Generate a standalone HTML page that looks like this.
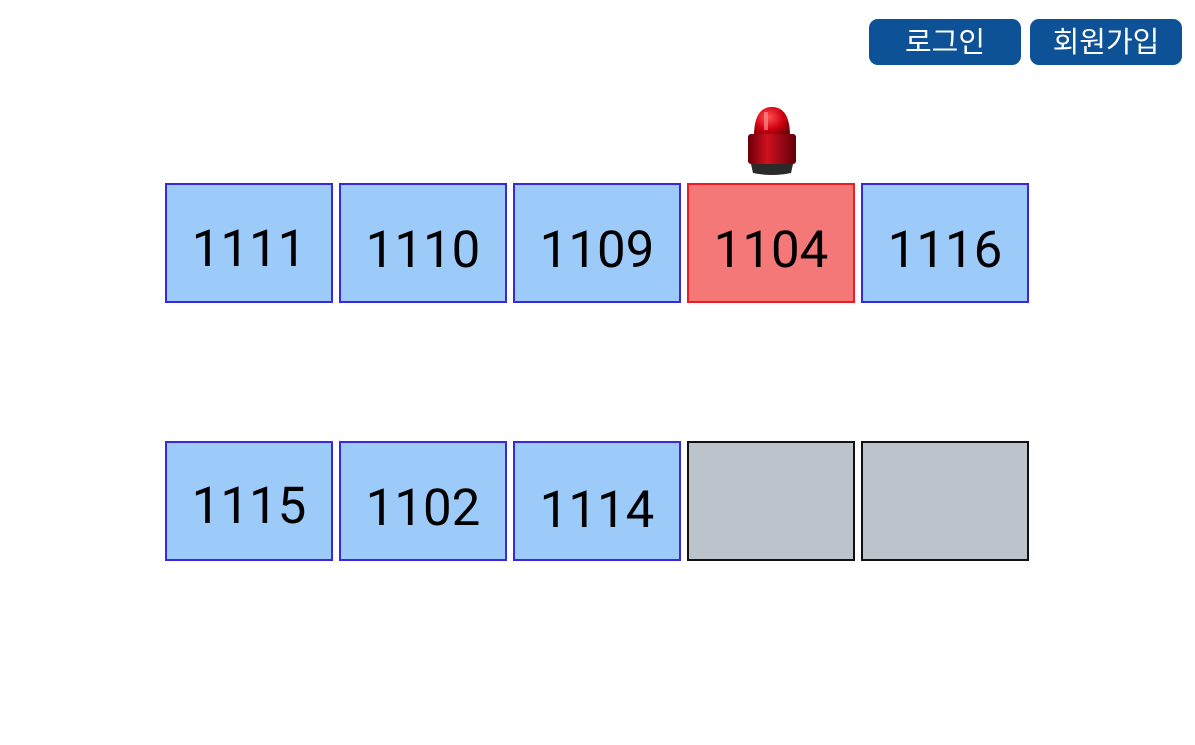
<!DOCTYPE html>
<html><head><meta charset="utf-8"><style>
body{margin:0;width:1195px;height:745px;background:#fff;position:relative;overflow:hidden;font-family:"Liberation Sans","Noto Sans CJK KR",sans-serif}
.btn{position:absolute;top:19px;height:46px;width:152px;background:#0d5197;border-radius:9px;color:#fff;font-size:29px;line-height:42px;text-align:center;font-family:"Noto Sans CJK KR",sans-serif}
.b{position:absolute;width:164px;height:116px;border:2px solid #3a28e0;background:#9ccbfa;font-size:51px;line-height:132px;text-align:center;color:#000;font-family:"Roboto","DejaVu Sans","Liberation Sans",sans-serif}
.r{background:#f57878;border-color:#ee1c24}
.g{background:#bcc3cb;border-color:#111}
</style></head><body>
<div class="btn" style="left:869px">로그인</div>
<div class="btn" style="left:1030px">회원가입</div>
<svg style="position:absolute;left:745px;top:104px" width="54" height="74" viewBox="0 0 54 74">
<defs><radialGradient id="d" cx="0.4" cy="0.35" r="0.7"><stop offset="0" stop-color="#ff5050"/><stop offset="0.6" stop-color="#d00010"/><stop offset="1" stop-color="#7a0008"/></radialGradient>
<linearGradient id="s" x1="0" x2="1"><stop offset="0" stop-color="#6a0008"/><stop offset="0.4" stop-color="#d01020"/><stop offset="1" stop-color="#600008"/></linearGradient></defs>
<path d="M9 32 C9 10 17 3 27 3 C37 3 45 10 45 32 Z" fill="url(#d)"/>
<rect x="3" y="30" width="48" height="30" rx="3" fill="url(#s)"/>
<path d="M6 60 H48 L46 69 Q27 73 8 69 Z" fill="#2a2a2a"/>
<rect x="19" y="8" width="4" height="18" fill="#ff9a9a" opacity="0.6"/>
</svg>
<div class="b" style="left:165px;top:183px;line-height:130px">1111</div>
<div class="b" style="left:339px;top:183px">1110</div>
<div class="b" style="left:513px;top:183px">1109</div>
<div class="b r" style="left:687px;top:183px">1104</div>
<div class="b" style="left:861px;top:183px">1116</div>
<div class="b" style="left:165px;top:441px;line-height:128px">1115</div>
<div class="b" style="left:339px;top:441px">1102</div>
<div class="b" style="left:513px;top:441px;line-height:136px">1114</div>
<div class="b g" style="left:687px;top:441px"></div>
<div class="b g" style="left:861px;top:441px"></div>
</body></html>
